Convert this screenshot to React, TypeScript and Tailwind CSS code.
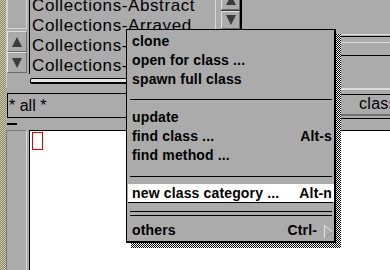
import React from "react";

const Tri = ({ dir, w = 10, h = 10 }: { dir: "up" | "down"; w?: number; h?: number }) => (
  <svg width={w} height={h} viewBox={`0 0 ${w} ${h}`} className="block">
    {dir === "up" ? (
      <polygon points={`${w / 2},0 ${w},${h} 0,${h}`} fill="#3c3c3c" />
    ) : (
      <polygon points={`0,0 ${w},0 ${w / 2},${h}`} fill="#3c3c3c" />
    )}
  </svg>
);

const Btn = ({ dir, className }: { dir: "up" | "down"; className: string }) => (
  <div
    className={
      "flex items-center justify-center border border-t-[#e2e2e2] border-l-[#e2e2e2] border-r-[#6c6c6c] border-b-[#6c6c6c] " +
      className
    }
  >
    <Tri dir={dir} />
  </div>
);

const Item = ({ label, keys }: { label: string; keys?: string }) => (
  <div className="h-[19px] leading-[19px] flex justify-between pl-[5px] pr-[2px] whitespace-nowrap">
    <span>{label}</span>
    {keys && <span>{keys}</span>}
  </div>
);

export default function App() {
  return (
    <div className="relative w-[390px] h-[270px] overflow-hidden bg-[#ababab] flex font-['Liberation_Sans',Arial,sans-serif] text-black">
      {/* textured window edge */}
      <div className="w-[6px] shrink-0 h-full bg-[image:repeating-conic-gradient(#8a866c_0%_25%,#d0ccb4_0%_50%)] bg-[length:2px_2px]" />

      <div className="flex-1 flex flex-col min-w-0">
        {/* top row: list panes */}
        <div className="flex h-[88px] shrink-0">
          {/* category pane */}
          <div className="flex w-[209px] shrink-0">
            <div className="w-[23px] shrink-0 flex flex-col border-l border-[#cfcfcf]">
              <div className="w-[20px] h-[29px] border-x border-b border-[#d4d4d4]" />
              <div className="h-[2px]" />
              <Btn dir="up" className="w-[20px] h-[21px]" />
              <Btn dir="down" className="w-[20px] h-[21px]" />
            </div>
            <div className="flex-1 flex flex-col min-w-0">
              <div className="h-[74px] border-l border-black overflow-hidden">
                <div className="-mt-[4px] pl-[2px] text-[17px] leading-[20px] tracking-[0.6px] whitespace-nowrap">
                  <div>Collections-Abstract</div>
                  <div>Collections-Arrayed</div>
                  <div>Collections-Cache</div>
                  <div>Collections-Constants</div>
                </div>
              </div>
              <div className="mt-[4px] ml-[1px] h-[6px] border border-black border-b-2 bg-[#e4e4e4] rounded-l-[2px]" />
            </div>
          </div>

          {/* class pane */}
          <div className="flex flex-1 min-w-0">
            <div className="w-[27px] shrink-0 flex border-l border-[#dadada] pl-[5px]">
              <div className="w-[19px] flex flex-col -mt-[10px]">
                <Btn dir="up" className="h-[20px]" />
                <div className="h-px bg-[#3a3a3a]" />
                <Btn dir="down" className="h-[18px]" />
              </div>
              <div className="w-[2px] bg-black" />
            </div>
            <div className="flex-1 flex flex-col">
              <div className="h-[34px]" />
              <div className="h-px bg-[#dcdcdc]" />
              <div className="h-px" />
              <div className="h-px bg-black" />
              <div className="h-[5px]" />
              <div className="h-px bg-[#dcdcdc]" />
              <div className="h-[12px]" />
              <div className="h-px bg-black" />
            </div>
          </div>
        </div>

        {/* filter row */}
        <div className="flex h-[42px] shrink-0">
          <div className="w-[209px] shrink-0 pt-[5px] pl-[1px] flex flex-col">
            <div className="h-[25px] border border-black pl-[1px] text-[16px] leading-[23px] whitespace-nowrap">* all *</div>
            <div className="mt-[5px] w-[10px] h-[2px] bg-black" />
          </div>
          <div className="flex-1 flex flex-col min-w-0">
            <div className="h-[2px] bg-[#dcdcdc]" />
            <div className="h-[4px]" />
            <div className="h-px bg-black" />
            <div className="h-[19px] flex text-[16px] leading-[18px] tracking-[0.3px] whitespace-nowrap overflow-hidden">
              <div className="w-[72px] shrink-0 text-center">instance</div>
              <div className="w-[54px] shrink-0 text-center">?</div>
              <div className="flex-1 pl-[18px]">class</div>
            </div>
            <div className="h-[2px] bg-[#6e6e6e]" />
            <div className="h-[2px]" />
            <div className="h-px bg-black" />
          </div>
        </div>

        {/* code pane */}
        <div className="flex flex-1">
          <div className="w-[23px] shrink-0 flex">
            <div className="w-[21px] border-l border-t border-[#7a7a7a] border-r border-r-[#d8d8d8]" />
          </div>
          <div className="flex-1 bg-white border-l border-t border-black">
            <div className="ml-[2px] mt-[1px] w-[11px] h-[18px] border border-[#e00000]" />
          </div>
        </div>
      </div>

      {/* menu shadow */}
      <div className="absolute left-[131px] top-[34px] w-[210px] h-[214px] bg-[image:repeating-conic-gradient(#000_0%_25%,#fff_0%_50%)] bg-[length:2px_2px]" />

      {/* popup menu */}
      <div className="absolute left-[126px] top-[29px] w-[210px] h-[214px] bg-[#ababab] border-l border-t border-r-2 border-b-2 border-black flex flex-col pt-[2px] text-[14px] font-bold tracking-[0.15px]">
        <Item label="clone" />
        <Item label="open for class ..." />
        <Item label="spawn full class" />
        <div className="pt-[10px] pb-[8px]">
          <div className="ml-[3px] mr-[2px] h-px bg-black" />
        </div>
        <Item label="update" />
        <Item label="find class ..." keys="Alt-s" />
        <Item label="find method ..." />
        <div className="pt-[11px] pb-[7px]">
          <div className="ml-[3px] mr-[2px] h-px bg-black" />
        </div>
        <div className="ml-[1px] h-[18px] leading-[18px] bg-white flex justify-between pl-[4px] pr-[2px] whitespace-nowrap">
          <span>new class category ...</span>
          <span>Alt-n</span>
        </div>
        <div className="ml-[1px] mr-[1px] h-px bg-black" />
        <div className="h-[8px]" />
        <div className="ml-[3px] mr-[2px] h-px bg-black" />
        <div className="h-[3px]" />
        <div className="ml-[3px] mr-[2px] h-px bg-black" />
        <div className="h-[5px]" />
        <div className="h-[19px] leading-[19px] flex items-center pl-[5px] pr-[1px] whitespace-nowrap">
          <span className="flex-1">others</span>
          <span>Ctrl-</span>
          <svg width="9" height="14" viewBox="0 0 9 14" className="ml-[7px] mt-[2px] block">
            <polyline points="0.5,13.5 0.5,0.5 8.5,7" fill="none" stroke="#e4e4e4" strokeWidth="1" />
            <line x1="8.5" y1="7" x2="0.5" y2="13.5" stroke="#8a8a8a" strokeWidth="1" />
          </svg>
        </div>
      </div>
    </div>
  );
}
